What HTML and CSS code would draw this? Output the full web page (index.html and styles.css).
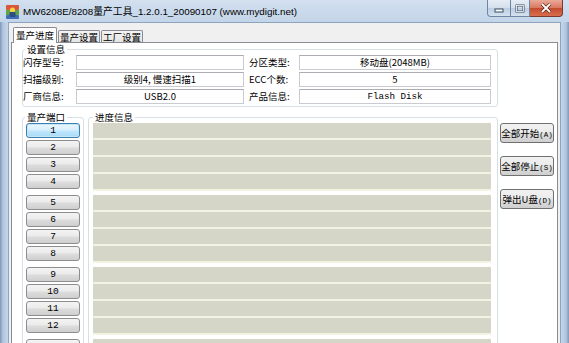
FILE: index.html
```html
<!DOCTYPE html>
<html>
<head>
    <title>MW6208E/8208量产工具</title>
    <link rel="stylesheet" href="styles.css">
</head>
<body>
    <div class="window">
        <div class="titlebar">
            <svg class="app-icon" width="15" height="16" viewBox="0 0 15 16">
                <rect x="1" y="1" width="13" height="5" rx="1" fill="#d9583a"/>
                <rect x="1" y="6" width="13" height="5" fill="#5fa54a"/>
                <rect x="1" y="11" width="13" height="4" rx="1" fill="#3f6fb5"/>
                <circle cx="7.5" cy="6" r="2.6" fill="#f3d34a"/>
                <rect x="4.5" y="8" width="6" height="5" rx="1" fill="#2f4f80"/>
            </svg>
            <span class="title">MW6208E/8208量产工具_1.2.0.1_20090107 (www.mydigit.net)</span>
            <div class="caption">
                <span class="cap cap-min">
                    <svg width="10" height="5" viewBox="0 0 10 5"><rect x="1" y="1" width="8" height="3" fill="#fff" stroke="#3b4c63"/></svg>
                </span>
                <span class="cap cap-max">
                    <svg width="10" height="9" viewBox="0 0 10 9"><rect x="1.5" y="1.5" width="7" height="6" fill="none" stroke="#3b4c63" stroke-width="2"/><rect x="1.5" y="1.5" width="7" height="6" fill="none" stroke="#fff" stroke-width="0.8"/></svg>
                </span>
                <span class="cap cap-close">
                    <svg width="12" height="10" viewBox="0 0 12 10"><path d="M2 1 L10 9 M10 1 L2 9" stroke="#5a2014" stroke-width="3.2"/><path d="M2 1 L10 9 M10 1 L2 9" stroke="#fff" stroke-width="1.8"/></svg>
                </span>
            </div>
        </div>

        <div class="client">
            <div class="tabs">
                <span class="tab active">量产进度</span>
                <span class="tab">量产设置</span>
                <span class="tab">工厂设置</span>
            </div>

            <div class="panel">
                <fieldset class="group info">
                    <legend>设置信息</legend>
                    <div class="info-grid">
                        <span class="label">闪存型号:</span>
                        <span class="field"></span>
                        <span class="label right">分区类型:</span>
                        <span class="field">移动盘(2048MB)</span>

                        <span class="label">扫描级别:</span>
                        <span class="field">级别4, 慢速扫描1</span>
                        <span class="label right">ECC个数:</span>
                        <span class="field">5</span>

                        <span class="label">厂商信息:</span>
                        <span class="field">USB2.0</span>
                        <span class="label right">产品信息:</span>
                        <span class="field mono">Flash Disk</span>
                    </div>
                </fieldset>

                <div class="main">
                    <fieldset class="group ports">
                        <legend>量产端口</legend>
                        <div class="block">
                            <button class="port focused">1</button>
                            <button class="port">2</button>
                            <button class="port">3</button>
                            <button class="port">4</button>
                        </div>
                        <div class="block">
                            <button class="port">5</button>
                            <button class="port">6</button>
                            <button class="port">7</button>
                            <button class="port">8</button>
                        </div>
                        <div class="block">
                            <button class="port">9</button>
                            <button class="port">10</button>
                            <button class="port">11</button>
                            <button class="port">12</button>
                        </div>
                        <div class="block">
                            <button class="port"></button>
                        </div>
                    </fieldset>

                    <fieldset class="group progress">
                        <legend>进度信息</legend>
                        <div class="block">
                            <div class="bar"></div>
                            <div class="bar"></div>
                            <div class="bar"></div>
                            <div class="bar"></div>
                        </div>
                        <div class="block">
                            <div class="bar"></div>
                            <div class="bar"></div>
                            <div class="bar"></div>
                            <div class="bar"></div>
                        </div>
                        <div class="block">
                            <div class="bar"></div>
                            <div class="bar"></div>
                            <div class="bar"></div>
                            <div class="bar"></div>
                        </div>
                        <div class="block">
                            <div class="bar"></div>
                        </div>
                    </fieldset>

                    <div class="actions">
                        <button class="action">全部开始<small>(A)</small></button>
                        <button class="action">全部停止<small>(S)</small></button>
                        <button class="action">弹出U盘<small>(D)</small></button>
                    </div>
                </div>
            </div>
        </div>
    </div>
</body>
</html>
```

FILE: styles.css
```css
* {
    box-sizing: border-box;
}
body {
    margin: 0;
    font-family: "Noto Sans CJK SC", sans-serif;
    font-size: 9.5px;
    color: #000;
}
.window {
    width: 569px;
    height: 343px;
    overflow: hidden;
    display: flex;
    flex-direction: column;
    padding: 0 8px;
    background: linear-gradient(to right, #7f98b6 0, #b2c6de 3px, #c4d6ea 8px, #c4d6ea 561px, #b2c6de 566px, #7f98b6 569px);
}

/* title bar */
.titlebar {
    height: 22px;
    margin: 0 -8px;
    display: flex;
    align-items: flex-start;
    padding-left: 5px;
    background: linear-gradient(#d2e0ef, #c3d5e9);
}
.app-icon {
    margin-top: 4px;
}
.title {
    margin: 5px 0 0 3px;
    font-family: "Liberation Sans", "Noto Sans CJK SC", sans-serif;
    font-size: 9.8px;
    line-height: 13px;
}
.caption {
    margin-left: auto;
    margin-right: 6px;
    display: flex;
}
.cap {
    height: 17px;
    display: flex;
    align-items: center;
    justify-content: center;
    border: 1px solid #6f86a3;
    border-top: none;
}
.cap-min {
    width: 24px;
    padding-top: 5px;
    border-radius: 0 0 0 4px;
    background: linear-gradient(#e6edf5, #d3dfec 50%, #bccde1 51%, #d4e2f0);
}
.cap-max {
    width: 19px;
    border-left: none;
    background: linear-gradient(#e6edf5, #d3dfec 50%, #bccde1 51%, #d4e2f0);
}
.cap-close {
    width: 33px;
    border-left: none;
    border-color: #7d3a2c;
    border-radius: 0 0 4px 0;
    background: linear-gradient(#e9a997, #d9775f 50%, #c44a2e 51%, #d86e4f);
}

/* client area */
.client {
    flex: 1;
    min-height: 0;
    background: #f0f0f0;
    border: 1px solid #8ea3bd;
    border-bottom: none;
    padding: 4px 2px 0 2px;
    display: flex;
    flex-direction: column;
}
.tabs {
    display: flex;
    align-items: flex-end;
    height: 16px;
    margin-left: 2px;
}
.tab {
    height: 13px;
    padding: 0 1px;
    line-height: 12px;
    border: 1px solid #898c95;
    border-bottom: none;
    border-radius: 2px 2px 0 0;
    background: linear-gradient(#f3f3f3, #e3e3e3);
    margin-left: 1px;
}
.tab.active {
    position: relative;
    z-index: 1;
    height: 16px;
    padding: 0 2px;
    line-height: 15px;
    margin-left: 0;
    background: #fff;
}
.panel {
    flex: 1;
    margin-top: -1px;
    background: #fff;
    border: 1px solid #898c95;
    border-bottom: none;
    padding-left: 10px;
}

/* group boxes */
.group {
    margin: 0;
    padding: 0;
    border: 1px solid #d5dfe5;
    border-radius: 3px;
}
.group legend {
    margin-left: 2px;
    padding: 0 2px;
    line-height: 12px;
    font-size: 9.5px;
}
.info {
    width: 476px;
    padding-bottom: 2px;
}
.info-grid {
    display: grid;
    grid-template-columns: 53px 168px 55px 192px;
    grid-auto-rows: 15px;
    row-gap: 2px;
}
.label {
    line-height: 15px;
    white-space: nowrap;
}
.label.right {
    padding-left: 5px;
}
.field {
    border: 1px solid #c9cbd0;
    border-top-color: #abadb3;
    text-align: center;
    line-height: 13px;
    font-size: 9.5px;
    white-space: nowrap;
}
.field.mono {
    font-family: "Liberation Mono", monospace;
    font-size: 9.2px;
}

/* ports and progress */
.main {
    display: flex;
    align-items: flex-start;
    margin-top: 4px;
}
.ports {
    width: 62px;
    height: 260px;
    padding: 0 0 0 3px;
}
.ports legend {
    margin-left: -1px;
}
.progress {
    width: 410px;
    height: 260px;
    margin-left: 4px;
    padding: 0 0 0 4px;
}
.progress legend {
    margin-left: 0;
}
.block {
    display: flex;
    flex-direction: column;
    margin-bottom: 4px;
}
.port {
    width: 54px;
    height: 15px;
    margin: 0 0 2px 0;
    padding: 0;
    border: 1px solid #8d8d8d;
    border-radius: 3px;
    background: linear-gradient(#f4f4f4, #ebebeb 45%, #dcdcdc 55%, #cfcfcf);
    font-family: "Liberation Mono", monospace;
    font-size: 9.5px;
    line-height: 13px;
    color: #000;
}
.port.focused {
    border-color: #3c7fb1;
    background: linear-gradient(#eaf6fd, #d9f0fc 45%, #bee6fd 55%, #a7d9f5);
    box-shadow: inset 0 0 0 1px #c5e6f7;
}
.bar {
    width: 398px;
    height: 17px;
    background: #d6d6c8;
    border-bottom: 2px solid #f3f3e4;
}

/* right buttons */
.actions {
    display: flex;
    flex-direction: column;
    gap: 13px;
    margin: 12px 0 0 2px;
}
.action {
    width: 54px;
    height: 20px;
    padding: 0;
    border: 1px solid #707070;
    border-radius: 3px;
    background: linear-gradient(#f2f2f2, #ebebeb 45%, #dddddd 55%, #cfcfcf);
    font-family: "Noto Sans CJK SC", sans-serif;
    font-size: 9.5px;
    white-space: nowrap;
    color: #000;
}
.action small {
    font-family: "Liberation Mono", monospace;
    font-size: 7.5px;
}
```
